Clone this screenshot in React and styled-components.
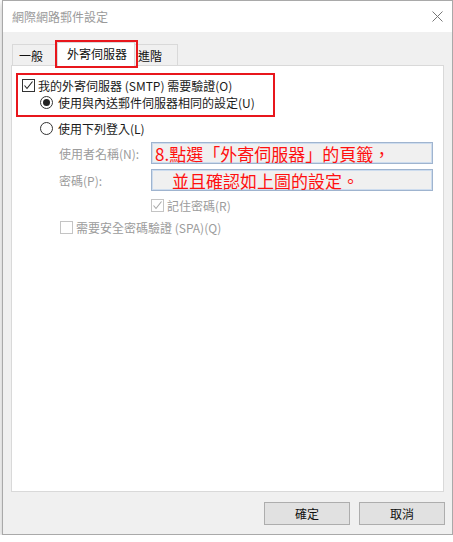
import React from 'react'
import { styled, createGlobalStyle } from 'styled-components'

const GlobalStyle = createGlobalStyle`
    html, body {
        margin: 0;
        padding: 0;
        background: #ffffff;
    }
    body {
        font-family: "Noto Sans CJK TC", "Noto Sans", "Liberation Sans", sans-serif;
        font-size: 12px;
        color: #1a1a1a;
    }
`

const Dialog = styled.div`
    width: 449px;
    height: 533px;
    margin-left: 2px;
    border: 1px solid #a9a9a9;
    background: #f0f0f0;
    display: flex;
    flex-direction: column;
    box-shadow: 0 3px 7px rgba(0, 0, 0, 0.28);
`

const TitleBar = styled.div`
    height: 31px;
    flex: none;
    background: #fff;
    display: flex;
    align-items: center;
    justify-content: space-between;
    padding: 0 9px 0 9px;
    color: #9a9a9a;
    font-size: 12px;
`

const CloseButton = styled.span`
    display: flex;
    width: 11px;
    height: 11px;
    margin-top: -1px;
`

const Body = styled.div`
    flex: 1;
    display: flex;
    flex-direction: column;
    padding: 9px 8px 0 8px;
`

const TabStrip = styled.div`
    display: flex;
    align-items: flex-end;
    padding-left: 1px;
    height: 24px;
    flex: none;
`

const Tab = styled.div`
    position: relative;
    box-sizing: border-box;
    height: ${p => p.$active ? '24px' : '21px'};
    width: ${p => p.$width}px;
    margin-left: ${p => p.$first ? '0' : '-1px'};
    margin-bottom: ${p => p.$active ? '-1px' : '0'};
    border: 1px solid #d9d9d9;
    border-bottom: none;
    background: ${p => p.$active ? '#fff' : '#f0f0f0'};
    z-index: ${p => p.$active ? 2 : 1};
    display: flex;
    align-items: center;
    padding-left: ${p => p.$pad}px;
    padding-bottom: ${p => p.$active ? '2px' : '0'};
    color: #111;
    font-size: 12px;

    ${p => p.$marked && `
        &::after {
            content: '';
            position: absolute;
            top: -3px;
            left: -3px;
            right: -4px;
            bottom: -2px;
            border: 2px solid #e8161c;
        }
    `}
`

const Panel = styled.div`
    flex: 1;
    background: #fff;
    border: 1px solid #d9d9d9;
    display: flex;
    flex-direction: column;
    padding: 7px 0 0 4px;
`

const Highlight = styled.div`
    width: 251px;
    border: 2px solid #e8161c;
    padding: 2px 0 4px 4px;
    display: flex;
    flex-direction: column;
`

const Row = styled.label`
    display: flex;
    align-items: center;
    height: 17px;
    gap: 3px;
    margin-left: ${p => p.$indent || 0}px;
    margin-top: ${p => p.$top || 0}px;
    color: ${p => p.$disabled ? '#9c9c9c' : '#1a1a1a'};
    white-space: nowrap;
`

const Box = styled.span`
    width: 11px;
    height: 11px;
    border: 1px solid ${p => p.$disabled ? '#c4c4c4' : '#333'};
    background: #fff;
    display: flex;
    align-items: center;
    justify-content: center;
    flex: none;
`

const Circle = styled.span`
    width: 11px;
    height: 11px;
    border: 1px solid #333;
    border-radius: 50%;
    background: #fff;
    display: flex;
    align-items: center;
    justify-content: center;
    flex: none;
    margin-right: 2px;

    &::after {
        content: '';
        display: ${p => p.$on ? 'block' : 'none'};
        width: 7px;
        height: 7px;
        border-radius: 50%;
        background: #222;
    }
`

const Fields = styled.div`
    display: grid;
    grid-template-columns: 92px 282px;
    row-gap: 5px;
    margin: 5px 0 0 43px;
    align-items: center;
`

const FieldLabel = styled.span`
    color: #9c9c9c;
`

const NoteBox = styled.div`
    height: 22px;
    box-sizing: border-box;
    border: 1px solid #9fb4cf;
    box-shadow: inset 0 0 0 1px #cddcee;
    background: #f0f0f0;
    display: flex;
    align-items: center;
    padding-left: ${p => p.$pad}px;
    color: #ff1010;
    font-size: 17px;
    line-height: 1;
    white-space: nowrap;
    overflow: hidden;
`

const Footer = styled.div`
    display: flex;
    justify-content: flex-end;
    gap: 9px;
    padding: 10px 0 9px 0;
    margin-right: -1px;
    flex: none;
`

const Button = styled.button`
    width: 86px;
    height: 23px;
    border: 1px solid #adadad;
    background: #e1e1e1;
    font-family: inherit;
    font-size: 12px;
    color: #111;
    padding: 0;
`

function Check({ disabled }) {
    return (
        <Box $disabled={disabled}>
            <svg width="11" height="11" viewBox="0 0 11 11">
                <polyline points="1.5,5.5 4,8.5 9.5,1.5" fill="none" stroke={disabled ? '#a8a8a8' : '#222'} strokeWidth="1.1" />
            </svg>
        </Box>
    )
}

export default function App() {
    return (
        <>
            <GlobalStyle />
            <Dialog>
                <TitleBar>
                    <span>網際網路郵件設定</span>
                    <CloseButton>
                        <svg width="11" height="11" viewBox="0 0 11 11">
                            <path d="M0.5 0.5 L10.5 10.5 M10.5 0.5 L0.5 10.5" stroke="#777" strokeWidth="1" />
                        </svg>
                    </CloseButton>
                </TitleBar>
                <Body>
                    <TabStrip>
                        <Tab $first $width={46} $pad={6}>一般</Tab>
                        <Tab $active $marked $width={78} $pad={9}>外寄伺服器</Tab>
                        <Tab $width={44} $pad={3}>進階</Tab>
                    </TabStrip>
                    <Panel>
                        <Highlight>
                            <Row>
                                <Check />
                                我的外寄伺服器 (SMTP) 需要驗證(O)
                            </Row>
                            <Row $indent={18}>
                                <Circle $on />
                                使用與內送郵件伺服器相同的設定(U)
                            </Row>
                        </Highlight>
                        <Row $indent={24} $top={3}>
                            <Circle />
                            使用下列登入(L)
                        </Row>
                        <Fields>
                            <FieldLabel>使用者名稱(N):</FieldLabel>
                            <NoteBox $pad={3}>8.點選「外寄伺服器」的頁籤，</NoteBox>
                            <FieldLabel>密碼(P):</FieldLabel>
                            <NoteBox $pad={20}>並且確認如上圖的設定。</NoteBox>
                        </Fields>
                        <Row $indent={135} $top={6} $disabled>
                            <Check disabled />
                            記住密碼(R)
                        </Row>
                        <Row $indent={44} $top={5} $disabled>
                            <Box $disabled />
                            需要安全密碼驗證 (SPA)(Q)
                        </Row>
                    </Panel>
                    <Footer>
                        <Button>確定</Button>
                        <Button>取消</Button>
                    </Footer>
                </Body>
            </Dialog>
        </>
    )
}
